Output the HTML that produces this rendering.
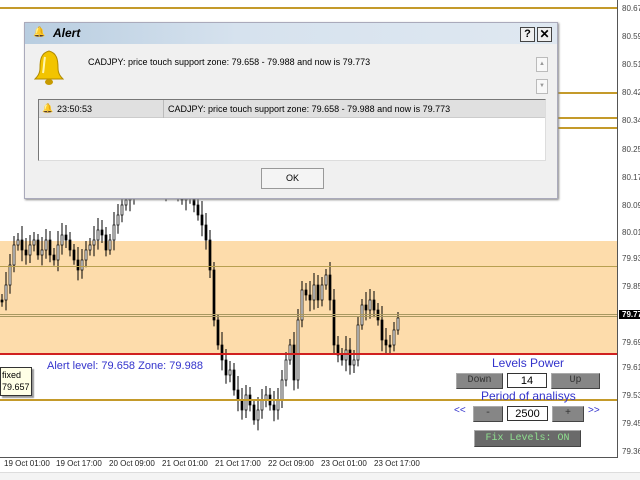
<!DOCTYPE html>
<html><head><meta charset="utf-8"><style>
*{margin:0;padding:0;box-sizing:border-box}
body{width:640px;height:480px;background:#fff;position:relative;overflow:hidden;font-family:"Liberation Sans",sans-serif}
.a{position:absolute}
.lbl{position:absolute;left:622px;font-size:8px;color:#444}
.t{position:absolute;top:459px;font-size:8px;color:#222}
.hl{position:absolute;height:2px}
.btn{position:absolute;background:#868686;border:1px solid #aaa;border-right-color:#444;border-bottom-color:#444;font-family:"Liberation Mono",monospace;font-size:10px;color:#333;text-align:center;line-height:14px}
.inp{position:absolute;background:#fff;border:1px solid #333;font-size:11px;text-align:center;line-height:14px}
.blue{position:absolute;color:#3333cc;font-size:12px}
</style></head><body>
<div class="a" style="left:0;top:241px;width:617px;height:113px;background:#fddcab"></div>
<svg class="a" style="left:0;top:0" width="617" height="460" id="ch"></svg>
<div class="hl" style="left:0;top:7px;width:617px;background:#c49a2a"></div>
<div class="hl" style="left:458px;top:92px;width:159px;background:#c49a2a"></div>
<div class="hl" style="left:455px;top:117px;width:162px;background:#c49a2a"></div>
<div class="hl" style="left:455px;top:127px;width:162px;background:#c49a2a"></div>
<div class="hl" style="left:0;top:266px;width:617px;background:#b8a050;height:1px"></div>
<div class="hl" style="left:0;top:314px;width:617px;background:#a89860;height:1px"></div>
<div class="hl" style="left:0;top:316px;width:617px;background:#a89860;height:1px"></div>
<div class="hl" style="left:0;top:353px;width:617px;background:#d02020"></div>
<div class="hl" style="left:0;top:399px;width:617px;background:#c49a2a"></div>
<div class="a" style="left:617px;top:0;width:1px;height:458px;background:#555"></div>
<div class="a" style="left:0;top:457px;width:618px;height:1px;background:#555"></div>
<div class="a" style="left:0;top:472px;width:640px;height:8px;background:#f4f4f4;border-top:1px solid #ddd"></div>
<div class="lbl" style="top:4px">80.67</div><div class="lbl" style="top:32px">80.59</div><div class="lbl" style="top:60px">80.51</div><div class="lbl" style="top:88px">80.42</div><div class="lbl" style="top:116px">80.34</div><div class="lbl" style="top:145px">80.25</div><div class="lbl" style="top:173px">80.17</div><div class="lbl" style="top:201px">80.09</div><div class="lbl" style="top:228px">80.01</div><div class="lbl" style="top:254px">79.93</div><div class="lbl" style="top:282px">79.85</div><div class="lbl" style="top:310px;left:619px;background:#000;color:#fff;font-weight:bold;padding:0 3px">79.77</div><div class="lbl" style="top:338px">79.69</div><div class="lbl" style="top:363px">79.61</div><div class="lbl" style="top:391px">79.53</div><div class="lbl" style="top:419px">79.45</div><div class="lbl" style="top:447px">79.36</div>
<div class="t" style="left:4px">19 Oct 01:00</div><div class="t" style="left:56px">19 Oct 17:00</div><div class="t" style="left:109px">20 Oct 09:00</div><div class="t" style="left:162px">21 Oct 01:00</div><div class="t" style="left:215px">21 Oct 17:00</div><div class="t" style="left:268px">22 Oct 09:00</div><div class="t" style="left:321px">23 Oct 01:00</div><div class="t" style="left:374px">23 Oct 17:00</div>
<div class="a" style="left:0;top:367px;width:32px;height:29px;background:#ffffe6;border:1px solid #333;box-shadow:2px 2px 1px #999;font-size:9px;line-height:12px;padding:1px 1px">fixed<br>79.657</div>
<div class="a" style="left:47px;top:360px;color:#3333cc;font-size:11px">Alert level: 79.658 Zone: 79.988</div>
<div class="blue" style="left:492px;top:356px">Levels Power</div>
<div class="btn" style="left:456px;top:373px;width:47px;height:16px">Down</div>
<div class="inp" style="left:507px;top:373px;width:40px;height:15px">14</div>
<div class="btn" style="left:551px;top:373px;width:49px;height:16px">Up</div>
<div class="blue" style="left:481px;top:389px">Period of analisys</div>
<div class="blue" style="left:454px;top:405px;font-size:10px">&lt;&lt;</div>
<div class="btn" style="left:473px;top:406px;width:30px;height:16px">-</div>
<div class="inp" style="left:507px;top:406px;width:41px;height:15px">2500</div>
<div class="btn" style="left:552px;top:406px;width:32px;height:16px">+</div>
<div class="blue" style="left:588px;top:405px;font-size:10px">&gt;&gt;</div>
<div class="btn" style="left:474px;top:430px;width:107px;height:17px;background:#6a6a6a;color:#8fe08f;line-height:15px">Fix Levels: ON</div>
<!-- dialog -->
<div class="a" style="left:24px;top:22px;width:534px;height:177px;background:#f0f0f0;border:1px solid #aab;box-shadow:1px 1px 2px #888">
 <div class="a" style="left:0;top:0;width:532px;height:21px;background:linear-gradient(90deg,#b8cde0,#d6e2ee 40%,#dfe8f1)"></div>
 <div class="a" style="left:8px;top:4px;font-size:10px;color:#c9a000">&#x1F514;</div>
 <div class="a" style="left:28px;top:3px;font-size:12px;font-weight:bold;font-style:italic">Alert</div>
 <div class="a" style="left:495px;top:4px;width:15px;height:15px;border:1px solid #444;background:#f0f0f0;font-size:11px;font-weight:bold;text-align:center;line-height:13px">?</div>
 <div class="a" style="left:512px;top:4px;width:15px;height:15px;border:1px solid #444;background:#f0f0f0;font-size:12px;font-weight:bold;text-align:center;line-height:13px">✕</div>
 <svg class="a" style="left:9px;top:26px" width="30" height="38"><path d="M15 2 C7 4 6 11 6 19 C6 25 3 28 1 30 L29 30 C27 28 24 25 24 19 C24 11 23 4 15 2Z" fill="#f2c400" stroke="#b08a00"/><ellipse cx="15" cy="33" rx="4" ry="3" fill="#c79a00"/><path d="M11 8 C10 13 10 19 9 24" stroke="#fff6b0" stroke-width="2" fill="none"/></svg>
 <div class="a" style="left:63px;top:34px;font-size:9px">CADJPY: price touch support zone: 79.658 - 79.988 and now is 79.773</div>
 <div class="a" style="left:511px;top:34px;width:12px;height:15px;border:1px solid #bbb;background:#f8f8f8;font-size:6px;color:#999;text-align:center;line-height:13px">▲</div>
 <div class="a" style="left:511px;top:56px;width:12px;height:15px;border:1px solid #bbb;background:#f8f8f8;font-size:6px;color:#999;text-align:center;line-height:13px">▼</div>
 <div class="a" style="left:13px;top:76px;width:508px;height:62px;background:#fff;border:1px solid #777;border-right-color:#ddd;border-bottom-color:#ddd">
  <div class="a" style="left:0;top:0;width:506px;height:18px;background:#e0e0e0;border-bottom:1px solid #ccc"></div>
  <div class="a" style="left:124px;top:0;width:1px;height:18px;background:#bbb"></div>
  <div class="a" style="left:3px;top:3px;font-size:9px;color:#c9a000">&#x1F514;</div>
  <div class="a" style="left:18px;top:4px;font-size:9px">23:50:53</div>
  <div class="a" style="left:129px;top:4px;font-size:9px">CADJPY: price touch support zone: 79.658 - 79.988 and now is 79.773</div>
 </div>
 <div class="a" style="left:236px;top:145px;width:63px;height:21px;background:#f4f4f4;border:1px solid #999;font-size:9px;text-align:center;line-height:19px">OK</div>
</div>
<script>
var ys=[300,285,265,245,240,250,255,245,240,255,250,240,255,260,245,235,240,250,260,270,260,250,245,240,230,235,250,240,225,215,205,200,195,190,185,180,180,175,180,185,190,180,185,190,195,200,190,195,205,215,225,240,270,320,345,360,375,370,390,400,410,395,405,420,410,400,395,405,410,400,380,360,345,380,320,290,295,300,285,300,285,275,300,345,355,360,350,365,360,325,305,310,300,310,320,340,345,345,330,318];
var s='',p=ys[0];
for(var i=0;i<ys.length;i++){var x=i*4+1,c=ys[i],t=Math.min(p,c),b=Math.max(p,c);if(b-t<2)b=t+2;
var w=6+((i*7)%9);
s+='<line x1="'+(x+1)+'" y1="'+(t-w)+'" x2="'+(x+1)+'" y2="'+(b+w*0.8)+'" stroke="#000"/>';
s+='<rect x="'+(x)+'" y="'+t+'" width="2" height="'+(b-t)+'" fill="'+(c<p?'#fff':'#000')+'" stroke="#000" stroke-width="0.7"/>';p=c;}
document.getElementById('ch').innerHTML=s;
</script>
</body></html>
